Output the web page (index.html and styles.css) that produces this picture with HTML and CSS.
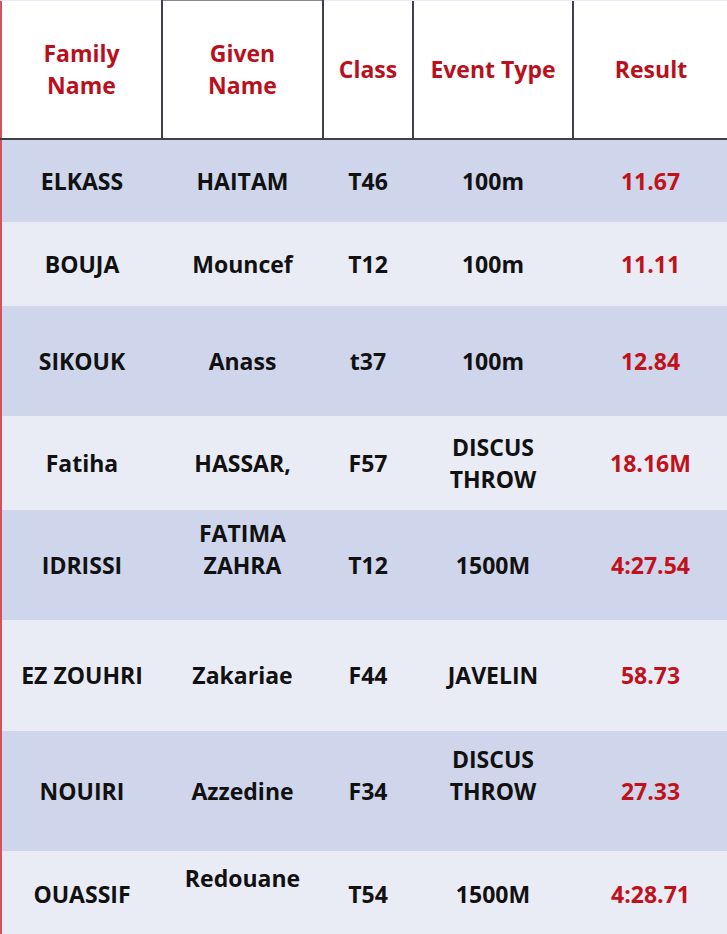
FILE: index.html
```html
<!DOCTYPE html>
<html>
<head>
<meta charset="utf-8">
<link rel="stylesheet" href="styles.css">
</head>
<body>
<table class="results">
  <colgroup>
    <col class="c1"><col class="c2"><col class="c3"><col class="c4"><col class="c5">
  </colgroup>
  <thead>
    <tr class="head">
      <th class="h-first">Family<br>Name</th>
      <th class="h-given">Given<br>Name</th>
      <th>Class</th>
      <th>Event Type</th>
      <th class="h-last">Result</th>
    </tr>
  </thead>
  <tbody>
    <tr class="dark r1"><td>ELKASS</td><td>HAITAM</td><td>T46</td><td>100m</td><td class="res">11.67</td></tr>
    <tr class="light r2"><td>BOUJA</td><td>Mouncef</td><td>T12</td><td>100m</td><td class="res">11.11</td></tr>
    <tr class="dark r3"><td>SIKOUK</td><td>Anass</td><td>t37</td><td>100m</td><td class="res">12.84</td></tr>
    <tr class="light r4"><td>Fatiha</td><td>HASSAR,</td><td>F57</td><td>DISCUS<br>THROW</td><td class="res">18.16M</td></tr>
    <tr class="dark r5"><td>IDRISSI</td><td>FATIMA<br>ZAHRA<br>&nbsp;</td><td>T12</td><td>1500M</td><td class="res">4:27.54</td></tr>
    <tr class="light r6"><td>EZ ZOUHRI</td><td>Zakariae</td><td>F44</td><td>JAVELIN</td><td class="res">58.73</td></tr>
    <tr class="dark r7"><td>NOUIRI</td><td>Azzedine</td><td>F34</td><td>DISCUS<br>THROW<br>&nbsp;</td><td class="res">27.33</td></tr>
    <tr class="light r8"><td>OUASSIF</td><td>Redouane<br>&nbsp;</td><td>T54</td><td>1500M</td><td class="res">4:28.71</td></tr>
  </tbody>
</table>
</body>
</html>
```
FILE: styles.css
```css
html, body {
  margin: 0;
  padding: 0;
  background: #e9ebf5;
}
body {
  font-family: "Open Sans", "Liberation Sans", sans-serif;
  font-weight: 700;
  font-size: 23px;
  line-height: 32px;
  color: #111;
}
.results {
  width: 727px;
  border-collapse: collapse;
  table-layout: fixed;
  border-left: 2px solid #d4505c;
}
.c1 { width: 161px; }
.c2 { width: 161px; }
.c3 { width: 90px; }
.c4 { width: 160px; }
.c5 { width: 155px; }
.results th,
.results td {
  padding: 0;
  text-align: center;
  vertical-align: middle;
  font-weight: 700;
}
.head {
  height: 138px;
  background: #fff;
}
.head th {
  color: #b8101c;
  border-top: none;
  border-bottom: 2px solid #3d4249;
  border-left: 2px solid #3f4349;
  padding-top: 0;
}
.head th.h-first {
  border-left: none;
}
.head th.h-given {
  border-top: 1px solid #8a8a8a;
}
.dark { background: #cfd5ea; }
.light { background: #e9ebf5; }
.r1 { height: 83px; }
.r2 { height: 84px; }
.r3 { height: 110px; }
.r4 { height: 94px; }
.r5 { height: 110px; }
.r6 { height: 111px; }
.r7 { height: 120px; }
.r8 { height: 86px; }
.results td.res {
  color: #c0121b;
}
```
